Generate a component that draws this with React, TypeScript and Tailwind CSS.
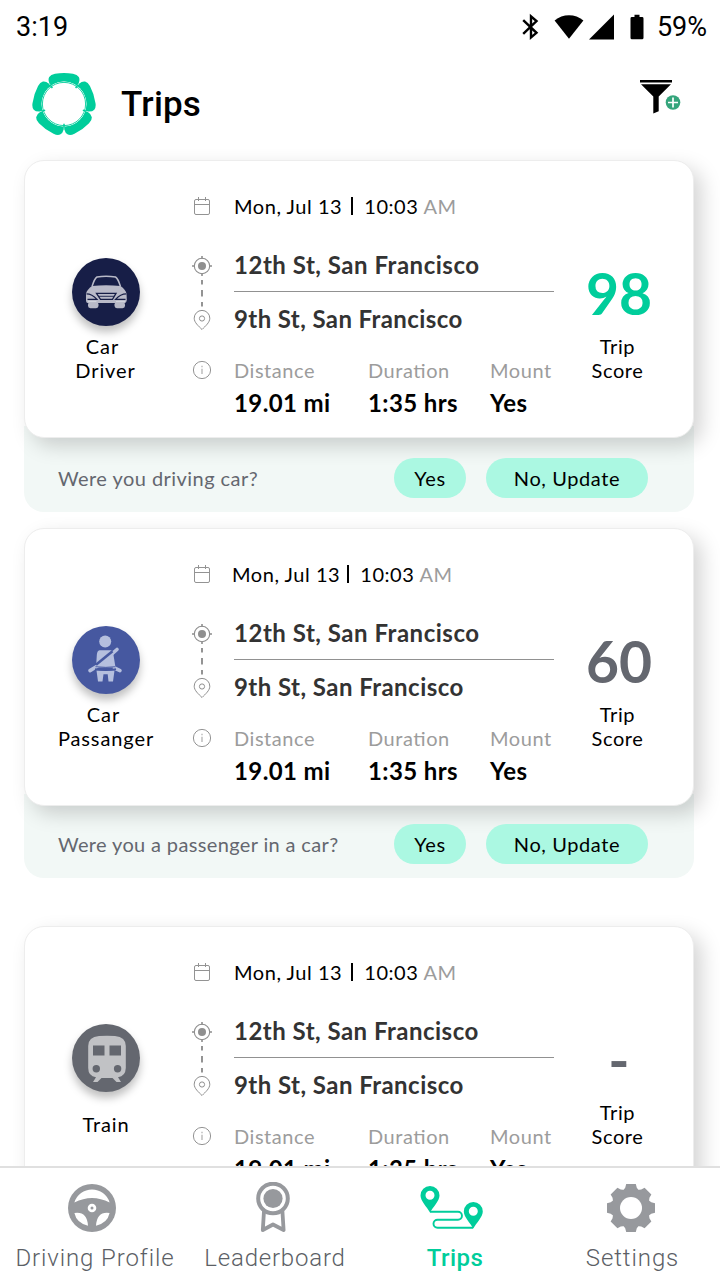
import React from "react";

type Trip = {
  id: number;
  mode: React.ReactNode;
  circle: string;
  icon: React.ReactNode;
  dateShift: string;
  barGap: string;
  startTracking: string;
  endTracking: string;
  score: string;
  scoreClass: string;
};

const PETALS = [0, 72, 144, 216, 288];
const TEETH = [0, 45, 90, 135, 180, 225, 270, 315];

function Logo() {
  return (
    <svg className="h-16 w-16" viewBox="-32 -32 64 64">
      {PETALS.map((a) => (
        <path
          key={a}
          transform={`rotate(${a})`}
          fill="#00cd9b"
          d="M-12.8 -18.2L-14.6 -20.5Q-16.2 -24.5 -14.8 -27Q-13.300 -29.500 -9 -30.200Q0 -31.800 9 -30.200Q13.300 -29.500 14.800 -27Q16.200 -24.500 14.600 -20.500L12.800 -18.200A22.400 22.400 0 0 0 -12.800 -18.200Z"
        />
      ))}
      <circle r="22.400" fill="#fff" />
      <circle r="21.600" fill="none" stroke="#00cd9b" strokeWidth="0.900" />
      {PETALS.map((a) => (
        <path key={a} transform={`rotate(${a + 36})`} stroke="#00cd9b" strokeWidth="1.500" d="M0 -23.500V-19.800" />
      ))}
    </svg>
  );
}

function FilterIcon() {
  return (
    <svg className="h-9 w-[42px]" viewBox="640 79 42 36">
      <path d="M640 80h32v2.600h-32zM641 84.200h30L658.700 96.500V111.200L653.300 113.500V96.500Z" fill="#000" />
      <circle cx="673" cy="102.500" r="7.300" fill="#35a57c" />
      <path d="M673 97.500v10M668 102.500h10" stroke="#fff" strokeWidth="1.700" />
    </svg>
  );
}

function StatusIcons() {
  return (
    <svg className="h-7 w-[124px]" viewBox="521 13 124 28">
      <path
        d="M523.200 20.200L536.500 32.800L531 37.500V16.300L536.500 21L523.200 33.800"
        fill="none"
        stroke="#000"
        strokeWidth="2.400"
      />
      <path d="M569 38.700L554.600 20.600Q561 15.300 569 15.300T583.400 20.600Z" />
      <path d="M614 14.500V39.500H589Z" />
      <path d="M634.500 14.800h5v2.200h2.600q1.400 0 1.400 1.400v19.400q0 1.500-1.400 1.500h-10.200q-1.400 0-1.400-1.500V18.400q0-1.400 1.400-1.400h2.600z" />
    </svg>
  );
}

function CalendarIcon() {
  return (
    <svg className="h-6 w-6" viewBox="0 0 24 24" fill="none" stroke="#939393">
      <rect x="4.500" y="5.500" width="15" height="15" rx="1.500" />
      <path d="M4.500 10.500h15M8.500 3v4M15.500 3v4" />
    </svg>
  );
}

function RouteRail() {
  return (
    <svg className="mt-9 h-[77px] w-6" viewBox="0 0 24 77" fill="none" stroke="#8f8f8f">
      <circle cx="12" cy="12" r="7.700" strokeWidth="1.100" />
      <circle cx="12" cy="12" r="4" fill="#8f8f8f" stroke="none" />
      <path d="M12 2v3M12 19v3M2 12h3M19 12h3" strokeWidth="1.600" />
      <path d="M12 26v4.500M12 36v6.500M12 48v4.500" strokeWidth="1.900" />
      <path d="M12 75.500C8.500 72 4.200 68.500 4.200 64.200A7.800 7.800 0 0 1 19.800 64.200C19.800 68.500 15.500 72 12 75.500Z" />
      <circle cx="12" cy="64.500" r="2.600" />
    </svg>
  );
}

function InfoIcon() {
  return (
    <svg className="mt-[27px] h-6 w-6" viewBox="0 0 24 24" fill="none" stroke="#949494">
      <circle cx="12" cy="12" r="8.600" />
      <path d="M12 10.800v5.200M12 7.800v1.400" strokeWidth="1.200" stroke="#adadad" />
    </svg>
  );
}

function CarIcon() {
  return (
    <svg className="h-[68px] w-[68px]" viewBox="0 0 68 68">
      <g fill="#b9bac8">
        <path d="M20 28.500Q22.500 20.500 25 19Q34 17.300 43.500 19Q46 20.500 48.500 28.500" fill="none" stroke="#b9bac8" strokeWidth="1.500" />
        <path d="M20 28Q34 26.500 48.500 28Q53.500 31.500 54.500 35.500L54.800 42Q54.500 45 53 45H15.800Q14 45 14 42V35.500Q15 31.500 20 28Z" />
        <rect x="16" y="44" width="10.500" height="6.200" rx="2.400" />
        <rect x="42.500" y="44" width="10.500" height="6.200" rx="2.400" />
      </g>
      <path d="M24.500 35.300H44L40.500 41.300H28.500Z" fill="#b9bac8" stroke="#171e47" strokeWidth="1.300" />
      <path d="M26.500 38.300H42" stroke="#171e47" strokeWidth="0.900" />
      <path d="M14.500 35.800Q20 35.800 25 41.300H15.500M54.300 35.800Q48.500 35.800 43.500 41.300H53.500" fill="none" stroke="#171e47" strokeWidth="1.200" />
      <path d="M16 43.600H24.500M44 43.600H53" fill="none" stroke="#dcdde4" strokeWidth="0.800" />
    </svg>
  );
}

function PassengerIcon() {
  return (
    <svg className="h-[68px] w-[68px]" viewBox="0 0 68 68">
      <g fill="#b5bfde">
        <circle cx="33.200" cy="15.500" r="6" />
        <path d="M27.500 24.200H38.500Q40.500 24.300 41 26L43.500 41.500H24L24.800 29Q25.200 24.500 27.500 24.200Z" />
        <path d="M35 32.200L45 23.500M25.500 40L18 44.600M42.500 42L48 44.600" fill="none" stroke="#b5bfde" strokeWidth="3.600" strokeLinecap="round" />
        <path d="M24.500 44.500H42.500L41 55.500H36.500L35.700 48.300H31.500L30.500 55.500H26Z" />
      </g>
      <path d="M24 38.800L40.500 25.300" stroke="#4658a0" strokeWidth="2.600" />
      <path d="M23 43.200Q34 45.200 44 43.200" fill="none" stroke="#4658a0" strokeWidth="1.700" />
      <path d="M23.500 40.700Q34 42 43.500 40.700" fill="none" stroke="#4658a0" strokeWidth="0.900" />
    </svg>
  );
}

function TrainIcon() {
  return (
    <svg className="h-[68px] w-[68px]" viewBox="0 0 68 68">
      <path d="M27 12Q35 11.500 43 12Q53.800 13 53.800 22V44Q53.500 52.300 46 53.300L49 58H44.500L40.500 54H29.500L25.500 58H21L24 53.300Q16.300 52.300 16.200 44V22Q16.200 13 27 12Z" fill="#c1c2c5" />
      <path d="M21 21.500H32.500V31.500H21ZM37.500 21.500H49V31.500H37.500Z" fill="#64676f" />
      <circle cx="24.300" cy="44.800" r="3.700" fill="#64676f" />
      <circle cx="45.600" cy="44.800" r="3.700" fill="#64676f" />
    </svg>
  );
}

const TRIPS: Trip[] = [
  {
    id: 1,
    mode: (
      <>
        <span className="pr-[7px]">Car</span>
        <span className="pr-px">Driver</span>
      </>
    ),
    circle: "bg-[#171e47]",
    icon: <CarIcon />,
    dateShift: "",
    barGap: "ml-[9px]",
    startTracking: "tracking-[0.52px]",
    endTracking: "tracking-[0.4px]",
    score: "98",
    scoreClass: "text-[#00cd9b]",
  },
  {
    id: 2,
    mode: (
      <>
        <span className="pr-[5px]">Car</span>
        <span>Passanger</span>
      </>
    ),
    circle: "bg-[#4658a0]",
    icon: <PassengerIcon />,
    dateShift: "-ml-[2px]",
    barGap: "ml-[7px]",
    startTracking: "tracking-[0.52px]",
    endTracking: "tracking-[0.45px]",
    score: "60",
    scoreClass: "text-[#64676f]",
  },
  {
    id: 3,
    mode: <span>Train</span>,
    circle: "bg-[#64676f]",
    icon: <TrainIcon />,
    dateShift: "",
    barGap: "ml-[9px]",
    startTracking: "tracking-[0.48px]",
    endTracking: "tracking-[0.45px]",
    score: "-",
    scoreClass: "text-[#64676f]",
  },
];

function Stat({ label, value, width }: { label: string; value: string; width: string }) {
  return (
    <div className={`${width} whitespace-nowrap`}>
      <div className="text-[20px] leading-6 tracking-[0.55px] text-[#9c9c9c] [font-feature-settings:'liga']">{label}</div>
      <div className="mt-[5px] text-[24px] leading-8 font-bold tracking-[0.4px] text-black">{value}</div>
    </div>
  );
}

function TripCard({ trip }: { trip: Trip }) {
  return (
    <article className="relative z-10 flex h-[278px] rounded-[20px] border border-[#ededed] bg-white shadow-[8px_8px_20px_rgba(0,0,0,0.17)]">
      <div className="flex w-[162px] flex-col items-center pt-[97px]">
        <div className={`h-[68px] w-[68px] rounded-full shadow-[0_6px_8px_rgba(0,0,0,0.25)] ${trip.circle}`}>{trip.icon}</div>
        <div className="mt-[8px] flex h-12 flex-col items-center justify-center text-[20px] leading-6 tracking-[0.9px] text-black">
          {trip.mode}
        </div>
      </div>
      <div className="flex w-[30px] flex-col items-center pt-[33px]">
        <CalendarIcon />
        <RouteRail />
        <InfoIcon />
      </div>
      <div className="ml-[17px] w-[320px] pt-[33px]">
        <div className={`flex h-6 items-center text-[20px] leading-6 tracking-[0.55px] whitespace-nowrap text-black ${trip.dateShift}`}>
          <span>Mon, Jul 13</span>
          <span className={`h-[18px] w-[2px] bg-black ${trip.barGap}`} />
          <span className="ml-[11px]">
            10:03 <span className="text-[#9c9c9c]">AM</span>
          </span>
        </div>
        <div className={`mt-[32px] text-[24px] leading-[30px] font-bold whitespace-nowrap text-[#333] ${trip.startTracking}`}>12th St, San Francisco</div>
        <div className="mt-[11px] h-px bg-[#919191]" />
        <div className={`mt-[12px] text-[24px] leading-[30px] font-bold whitespace-nowrap text-[#333] ${trip.endTracking}`}>9th St, San Francisco</div>
        <div className="mt-6 flex">
          <Stat label="Distance" value="19.01 mi" width="w-[134px]" />
          <Stat label="Duration" value="1:35 hrs" width="w-[122px]" />
          <Stat label="Mount" value="Yes" width="w-[64px]" />
        </div>
      </div>
      <div className="flex w-[126px] flex-col items-center pt-[102px] text-center">
        <div className={`h-[60px] pl-1 text-[57px] leading-[60px] font-bold ${trip.scoreClass}`}>{trip.score}</div>
        <div className="mt-[11px] pl-px text-[20px] leading-6 tracking-[0.6px] text-black">
          Trip
          <br />
          Score
        </div>
      </div>
    </article>
  );
}

function Prompt({ question, size }: { question: string; size: string }) {
  return (
    <div className={`-mt-3 flex items-start rounded-b-[20px] bg-[#f2f8f6] pr-[46px] pl-[34px] text-[20px] leading-10 ${size}`}>
      <p className="flex-1 whitespace-nowrap text-[#64676f]">{question}</p>
      <div className="relative z-20 flex gap-5 tracking-[0.6px] text-black">
        <button className="h-10 w-[72px] rounded-full bg-[#abf8e2]">Yes</button>
        <button className="h-10 w-[162px] rounded-full bg-[#abf8e2]">No, Update</button>
      </div>
    </div>
  );
}

function WheelIcon() {
  return (
    <svg className="h-[52px] w-[52px]" viewBox="-26 -26 52 52">
      <circle r="24" fill="#97999d" />
      <path d="M-17.600 -5.500A18.400 18.400 0 0 1 17.600 -5.500Q0 -14.500 -17.600 -5.500Z" fill="#fff" />
      <path d="M-17.600 5Q-5 3 -4 17.700Q-15.500 15 -17.600 5ZM17.600 5Q5 3 4 17.700Q15.500 15 17.600 5Z" fill="#fff" />
      <circle r="2.900" fill="none" stroke="#fff" strokeWidth="2.800" />
    </svg>
  );
}

function MedalIcon() {
  return (
    <svg className="ml-[2px] h-[52px] w-[52px]" viewBox="-26 -26 52 52" fill="none" stroke="#97999d">
      <circle cy="-9.500" r="14.800" strokeWidth="4" />
      <circle cy="-9.500" r="9.600" fill="#97999d" stroke="none" />
      <path d="M-9 3L-10.200 22L0 16.500L10.600 22L9.400 3" strokeWidth="3.800" strokeLinejoin="round" />
    </svg>
  );
}

function RouteIcon() {
  return (
    <svg className="h-[52px] w-[66px]" viewBox="419 1182 66 52">
      <path d="M430 1211.800H458A3.900 3.900 0 0 1 458 1219.700H437.500A4 4 0 0 0 437.500 1227.700H473" fill="none" stroke="#00cd9b" strokeWidth="1.900" />
      <g fill="#00cd9b" fillRule="evenodd">
        <path d="M430 1212.500C427 1207 420.500 1201 420.500 1195.500A9.500 9.500 0 0 1 439.500 1195.500C439.500 1201 433 1207 430 1212.500ZM430 1190.800A4.500 4.500 0 1 0 430 1199.800A4.500 4.500 0 1 0 430 1190.800Z" />
        <path d="M473.300 1228.500C470.300 1223 463.800 1217 463.800 1211.500A9.500 9.500 0 0 1 482.800 1211.500C482.800 1217 476.300 1223 473.300 1228.500ZM473.300 1206.800A4.500 4.500 0 1 0 473.300 1215.800A4.500 4.500 0 1 0 473.300 1206.800Z" />
      </g>
    </svg>
  );
}

function GearIcon() {
  return (
    <svg className="ml-[3px] h-[52px] w-[52px]" viewBox="-26 -26 52 52" fill="#97999d">
      {TEETH.map((a) => (
        <path key={a} transform={`rotate(${a})`} d="M-4.800 -24H4.800L5.800 -20.300L8.300 -17H-8.300L-5.800 -20.300Z" />
      ))}
      <circle r="19" />
      <circle r="11" fill="#fff" />
    </svg>
  );
}

function NavItem({ icon, label, width, active, tracking }: { icon: React.ReactNode; label: string; width: string; active?: boolean; tracking: string }) {
  return (
    <a className={`flex flex-col items-center pt-[14px] ${width} ${active ? "font-medium text-[#00cd9b]" : "font-light text-[#5c5f66]"}`}>
      <span className="pr-[6px]">{icon}</span>
      <span className={`mt-[9px] text-[24px] leading-[30px] whitespace-nowrap ${tracking}`}>{label}</span>
    </a>
  );
}

export default function App() {
  return (
    <div className="flex h-[1280px] w-[720px] flex-col overflow-hidden bg-white font-['Lato',sans-serif]">
      <div className="flex h-[54px] shrink-0 items-center pr-[13px] pl-4 font-['Roboto',sans-serif] text-[27px] text-black">
        <span className="flex-1">3:19</span>
        <StatusIcons />
        <span className="ml-[12px] text-[27px]">59%</span>
      </div>
      <header className="flex h-[94px] shrink-0 items-start pr-[38px] pl-8 pt-[18px]">
        <Logo />
        <h1 className="mt-px ml-[25px] flex-1 font-['Roboto',sans-serif] text-[35px] leading-[64px] font-medium tracking-[0.2px] text-black">Trips</h1>
        <div className="pt-[7px]">
          <FilterIcon />
        </div>
      </header>
      <main className="min-h-0 flex-1 overflow-hidden pt-3 pr-[26px] pl-6">
        <section>
          <TripCard trip={TRIPS[0]} />
          <Prompt question="Were you driving car?" size="h-[86px] pt-8 tracking-[0.45px]" />
        </section>
        <section className="mt-4">
          <TripCard trip={TRIPS[1]} />
          <Prompt question="Were you a passenger in a car?" size="h-[84px] pt-[30px] tracking-[0.36px]" />
        </section>
        <section className="mt-12">
          <TripCard trip={TRIPS[2]} />
        </section>
      </main>
      <nav className="z-30 flex h-[114px] shrink-0 border-t-2 border-[#e0e0e0] bg-white pl-[5px] font-['Roboto',sans-serif]">
        <NavItem icon={<WheelIcon />} label="Driving Profile" width="w-[180px]" tracking="tracking-[0.9px]" />
        <NavItem icon={<MedalIcon />} label="Leaderboard" width="w-[180px]" tracking="tracking-[0.8px]" />
        <NavItem icon={<RouteIcon />} label="Trips" width="w-[180px]" tracking="tracking-[0.5px]" active />
        <NavItem icon={<GearIcon />} label="Settings" width="w-[175px]" tracking="tracking-[0.9px]" />
      </nav>
    </div>
  );
}
